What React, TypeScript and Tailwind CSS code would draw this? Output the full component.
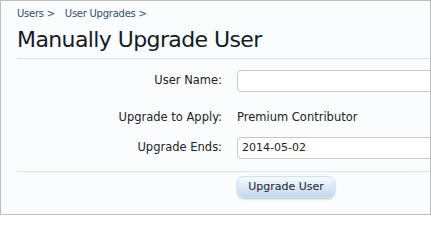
import React from "react";

const font = { fontFamily: '"DejaVu Sans", Verdana, sans-serif' };

export default function App() {
  return (
    <div
      className="w-[431px] h-[215px] overflow-hidden border border-[#bdbdbd] bg-[#fbfcfe] text-[#222]"
      style={font}
    >
      <div className="pl-4">
        <div className="flex gap-[10px] pt-[6px] text-[10px] leading-[13px] tracking-[-0.25px] text-[#2f4e6f] font-['DejaVu_Sans',sans-serif]">
          <span>Users &gt;</span>
          <span>User Upgrades &gt;</span>
        </div>
        <h1 className="mt-[5px] text-[22px] leading-[30px] text-[#141a24] font-['DejaVu_Sans',sans-serif] tracking-[-0.6px]">
          Manually Upgrade User
        </h1>
        <div className="mt-[3px] h-px bg-[#d6e4ec]" />
        <div className="grid grid-cols-[205px_1fr] gap-x-[15px] items-center text-[11.5px] text-[#222] font-['DejaVu_Sans',sans-serif]">
          <div className="mt-[11px] text-right">User Name:</div>
          <div className="mt-[11px] h-[22px] w-[260px] rounded-[4px] border border-[#c8c8c8] bg-white" />
          <div className="mt-[15px] text-right leading-[20px]">Upgrade to Apply:</div>
          <div className="mt-[15px] leading-[20px]">Premium Contributor</div>
          <div className="mt-[10px] text-right">Upgrade Ends:</div>
          <div className="mt-[10px] h-[22px] w-[260px] rounded-[4px] border border-[#c8c8c8] bg-white pl-[4px] leading-[20px] text-[11px]">
            2014-05-02
          </div>
        </div>
        <div className="mt-[12px] h-px bg-[#d6e4ec]" />
        <div className="grid grid-cols-[205px_1fr] gap-x-[15px] pt-[4px]">
          <div />
          <div className="flex h-[22px] w-[98px] items-center justify-center rounded-[7px] border border-[#cfe0ee] bg-gradient-to-b from-[#f7fbfe] to-[#bfd8ee] text-[11px] text-[#1c2430] shadow-[0_1px_2px_rgba(0,0,0,0.25)]">
            Upgrade User
          </div>
        </div>
      </div>
    </div>
  );
}
